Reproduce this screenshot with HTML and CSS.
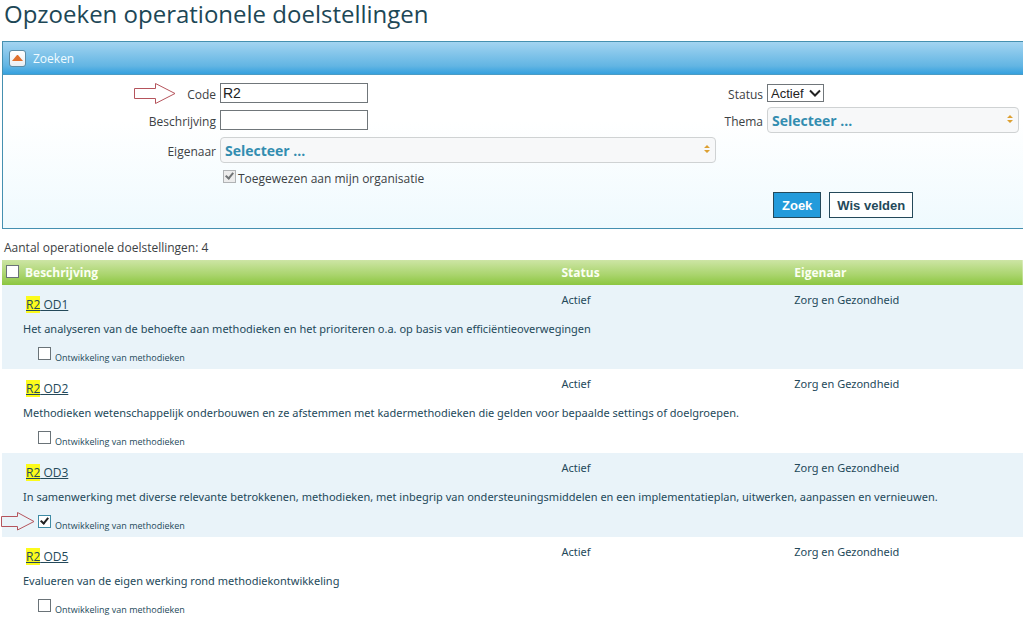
FILE: index.html
```html
<!DOCTYPE html>
<html lang="nl">
<head>
<meta charset="utf-8">
<title>Opzoeken operationele doelstellingen</title>
<link rel="stylesheet" href="styles.css">
</head>
<body>
<h1 class="title">Opzoeken operationele doelstellingen</h1>

<form class="panel">
  <div class="panel-head">
    <button type="button" class="toggle" aria-label="Zoeken inklappen">
      <svg width="11" height="7" viewBox="0 0 11 7"><path d="M0 6 L5 0 H6 L11 6 Z" fill="#e0702c"/></svg>
    </button>
    <h2 class="panel-title">Zoeken</h2>
  </div>
  <div class="panel-body">
    <div class="fields fields-left">
      <label class="label" for="code">
        <svg class="arrow" width="42" height="21" viewBox="0 0 42 21"><path d="M.5 5.500H21.500V.5L41 10.500 21.500 20.500V15.500H.5Z"/></svg>
        Code</label>
      <input class="text" type="text" id="code" value="R2">
      <label class="label" for="beschrijving">Beschrijving</label>
      <input class="text" type="text" id="beschrijving">
      <label class="label" for="eigenaar">Eigenaar</label>
      <div class="picker">
        <select class="picker-select" id="eigenaar"><option>Selecteer ...</option></select>
        <svg class="picker-icon" width="6" height="8" viewBox="0 0 6 8"><path d="M0 3 3 0 6 3ZM0 5H6L3 8Z"/></svg>
      </div>
      <div class="org">
        <input class="check check-disabled" type="checkbox" id="org" checked disabled>
        <label class="org-label" for="org">Toegewezen aan mijn organisatie</label>
      </div>
    </div>
    <div class="fields fields-right">
      <label class="label" for="status">Status</label>
      <div class="status">
        <select class="status-select" id="status"><option>Actief</option></select>
        <svg class="status-icon" width="12" height="8" viewBox="0 0 12 8"><path d="M1 1.500 6 6.500 11 1.500"/></svg>
      </div>
      <label class="label" for="thema">Thema</label>
      <div class="picker">
        <select class="picker-select" id="thema"><option>Selecteer ...</option></select>
        <svg class="picker-icon" width="6" height="8" viewBox="0 0 6 8"><path d="M0 3 3 0 6 3ZM0 5H6L3 8Z"/></svg>
      </div>
      <div class="actions">
        <button type="button" class="btn btn-primary">Zoek</button>
        <button type="button" class="btn">Wis velden</button>
      </div>
    </div>
  </div>
</form>

<p class="count">Aantal operationele doelstellingen: 4</p>

<table class="results">
  <thead>
    <tr>
      <th class="col-main"><span class="head-main"><input class="check" type="checkbox" aria-label="Alles selecteren">Beschrijving</span></th>
      <th class="col-status">Status</th>
      <th class="col-owner">Eigenaar</th>
    </tr>
  </thead>
  <tbody class="item">
    <tr class="row-code"><td class="code"><a href="#od1"><mark>R2</mark> OD1</a></td><td>Actief</td><td>Zorg en Gezondheid</td></tr>
    <tr class="row-desc"><td colspan="3">Het analyseren van de behoefte aan methodieken en het prioriteren o.a. op basis van efficiëntieoverwegingen</td></tr>
    <tr class="row-check"><td colspan="3"><div class="sub"><input class="check" type="checkbox" id="od1"><label for="od1">Ontwikkeling van methodieken</label></div></td></tr>
  </tbody>
  <tbody class="item">
    <tr class="row-code"><td class="code"><a href="#od2"><mark>R2</mark> OD2</a></td><td>Actief</td><td>Zorg en Gezondheid</td></tr>
    <tr class="row-desc"><td colspan="3">Methodieken wetenschappelijk onderbouwen en ze afstemmen met kadermethodieken die gelden voor bepaalde settings of doelgroepen.</td></tr>
    <tr class="row-check"><td colspan="3"><div class="sub"><input class="check" type="checkbox" id="od2"><label for="od2">Ontwikkeling van methodieken</label></div></td></tr>
  </tbody>
  <tbody class="item">
    <tr class="row-code"><td class="code"><a href="#od3"><mark>R2</mark> OD3</a></td><td>Actief</td><td>Zorg en Gezondheid</td></tr>
    <tr class="row-desc"><td colspan="3">In samenwerking met diverse relevante betrokkenen, methodieken, met inbegrip van ondersteuningsmiddelen en een implementatieplan, uitwerken, aanpassen en vernieuwen.</td></tr>
    <tr class="row-check"><td colspan="3"><div class="sub"><svg class="arrow arrow-row" width="35" height="19" viewBox="0 0 35 19"><path d="M1.500 4.500H17.500V.5L34 9.500 17.500 18V14.500H1.500Z"/></svg><input class="check check-focus" type="checkbox" id="od3" checked><label for="od3">Ontwikkeling van methodieken</label></div></td></tr>
  </tbody>
  <tbody class="item">
    <tr class="row-code"><td class="code"><a href="#od5"><mark>R2</mark> OD5</a></td><td>Actief</td><td>Zorg en Gezondheid</td></tr>
    <tr class="row-desc"><td colspan="3">Evalueren van de eigen werking rond methodiekontwikkeling</td></tr>
    <tr class="row-check"><td colspan="3"><div class="sub"><input class="check" type="checkbox" id="od5"><label for="od5">Ontwikkeling van methodieken</label></div></td></tr>
  </tbody>
</table>
</body>
</html>
```

FILE: styles.css
```css
* { box-sizing: border-box; }

body {
  margin: 0;
  background: #fff;
  color: #24495a;
  font: 12px/16px "Open Sans", "Noto Sans", sans-serif;
}

.title {
  margin: 0;
  padding: 0 4px;
  height: 41px;
  font-size: 24px;
  line-height: 28px;
  font-weight: 400;
  color: #1d4756;
}

/* search panel */
.panel {
  margin-left: 2px;
  border: 1px solid #4590b0;
  border-right: 0;
}

.panel-head {
  display: flex;
  align-items: center;
  gap: 7px;
  height: 33px;
  padding: 0 6px;
  background: linear-gradient(#a3d4f1, #62b5e3 75%, #35a1df);
  border-bottom: 1px solid #4b9cc4;
}

.toggle {
  display: flex;
  align-items: center;
  justify-content: center;
  width: 17px;
  height: 17px;
  padding: 0;
  border: 1px solid #5d8ba3;
  border-radius: 3px;
  background: linear-gradient(#fff, #e9eef2);
}

.panel-title {
  margin: 0;
  padding-top: 2px;
  font-size: 12px;
  font-weight: 400;
  color: #f0fbff;
}

.panel-body {
  display: grid;
  grid-template-columns: 713fr 303fr;
  padding: 8px 4px 10px 0;
  background: linear-gradient(#fff 30%, #effafe);
  color: #3c4144;
}

.fields {
  display: grid;
  align-items: center;
  align-content: start;
  column-gap: 4px;
}

.fields-left {
  grid-template-columns: 213px 1fr;
  grid-template-rows: 20px 20px 26px 16px;
  row-gap: 7px;
}

.fields-right {
  grid-template-columns: 47px 1fr;
  grid-template-rows: 20px 26px;
  row-gap: 4px;
}

.label {
  position: relative;
  padding-top: 3px;
  text-align: right;
}

.arrow {
  position: absolute;
  left: 131px;
  top: -1px;
  fill: none;
  stroke: #b5545c;
}

.text {
  width: 148px;
  height: 20px;
  padding: 0 2px;
  border: 1px solid #70767a;
  background: #fff;
  color: #222;
  font: 14px "Liberation Sans", Arial, sans-serif;
}

.picker,
.status {
  position: relative;
}

.picker-select {
  display: block;
  appearance: none;
  width: 100%;
  height: 26px;
  padding: 0 4px;
  border: 1px solid #cfd2d3;
  border-radius: 4px;
  background: #f7f8f9;
  color: #338db0;
  font: bold 14px "Open Sans", "Noto Sans", sans-serif;
}

.picker-icon {
  position: absolute;
  right: 6px;
  top: 8px;
  fill: #dda032;
}

.status {
  width: 57px;
}

.status-select {
  display: block;
  appearance: none;
  width: 100%;
  height: 18px;
  padding: 0 3px;
  border: 1px solid #70767a;
  border-radius: 0;
  background: #fff;
  color: #222;
  font: 13px "Liberation Sans", Arial, sans-serif;
}

.status-icon {
  position: absolute;
  right: 3px;
  top: 5px;
  fill: none;
  stroke: #222;
  stroke-width: 2;
}

.org {
  grid-column: 2;
  display: flex;
  align-items: flex-start;
  gap: 2px;
  padding-left: 3px;
}

.org-label {
  padding-top: 1px;
}

.actions {
  grid-column: 2;
  display: flex;
  gap: 8px;
  padding: 55px 0 0 6px;
}

.btn {
  height: 26px;
  padding: 0 7px;
  border: 1px solid #24495a;
  background: #fff;
  color: #24495a;
  font: bold 13px "Liberation Sans", Arial, sans-serif;
}

.btn-primary {
  padding: 0 8px;
  background: #239bdb;
  color: #fff;
}

/* check boxes */
.check {
  appearance: none;
  flex: none;
  width: 13px;
  height: 13px;
  margin: 0;
  border: 1px solid #6a7378;
  background: #fff;
}

.check:checked::after {
  content: "";
  display: block;
  width: 3px;
  height: 6px;
  margin: 0 0 0 3px;
  border: solid #222;
  border-width: 0 2px 2px 0;
  transform: rotate(40deg);
}

.check-disabled {
  border-color: #b0b3b5;
  background: #ececec;
}

.check-disabled:checked::after {
  border-color: #707476;
}

.check-focus {
  border-color: #3e8ba5;
}

/* results */
.count {
  margin: 0;
  padding: 11px 4px 4px;
  color: #3c4144;
}

.results {
  width: calc(100% - 2px);
  margin-left: 2px;
  border-collapse: collapse;
  table-layout: fixed;
}

.results th {
  height: 25px;
  padding: 1px 0 0;
  text-align: left;
  color: #fbfff2;
}

.results thead {
  background: linear-gradient(#cde5a5, #a9d46c 60%, #8cc63f);
}

.head-main {
  display: flex;
  align-items: flex-start;
  gap: 6px;
  padding-left: 4px;
}

.col-main { width: 54.8%; }
.col-status { width: 22.8%; }

.results td {
  padding: 0;
  font-family: "Noto Sans", "Open Sans", sans-serif;
  font-size: 11px;
}

.item:nth-of-type(odd) {
  background: #e9f3f9;
}

.row-code td {
  height: 32px;
  padding-top: 7px;
  vertical-align: top;
}

.results .code {
  padding: 12px 0 0 24px;
  font-family: "Open Sans", "Noto Sans", sans-serif;
  font-size: 12px;
}

.code a {
  color: inherit;
}

.code mark {
  background: #fcfb1c;
  color: inherit;
}

.row-desc td {
  height: 24px;
  padding-left: 21px;
  white-space: nowrap;
}

.row-check td {
  height: 28px;
  padding: 6px 0 0 36px;
  vertical-align: top;
}

.sub {
  position: relative;
  display: flex;
  align-items: flex-start;
  gap: 4px;
  font-family: "Open Sans", "Noto Sans", sans-serif;
  font-size: 9px;
}

.sub label {
  padding-top: 3px;
}

.arrow-row {
  left: -38px;
  top: -3px;
}
```
